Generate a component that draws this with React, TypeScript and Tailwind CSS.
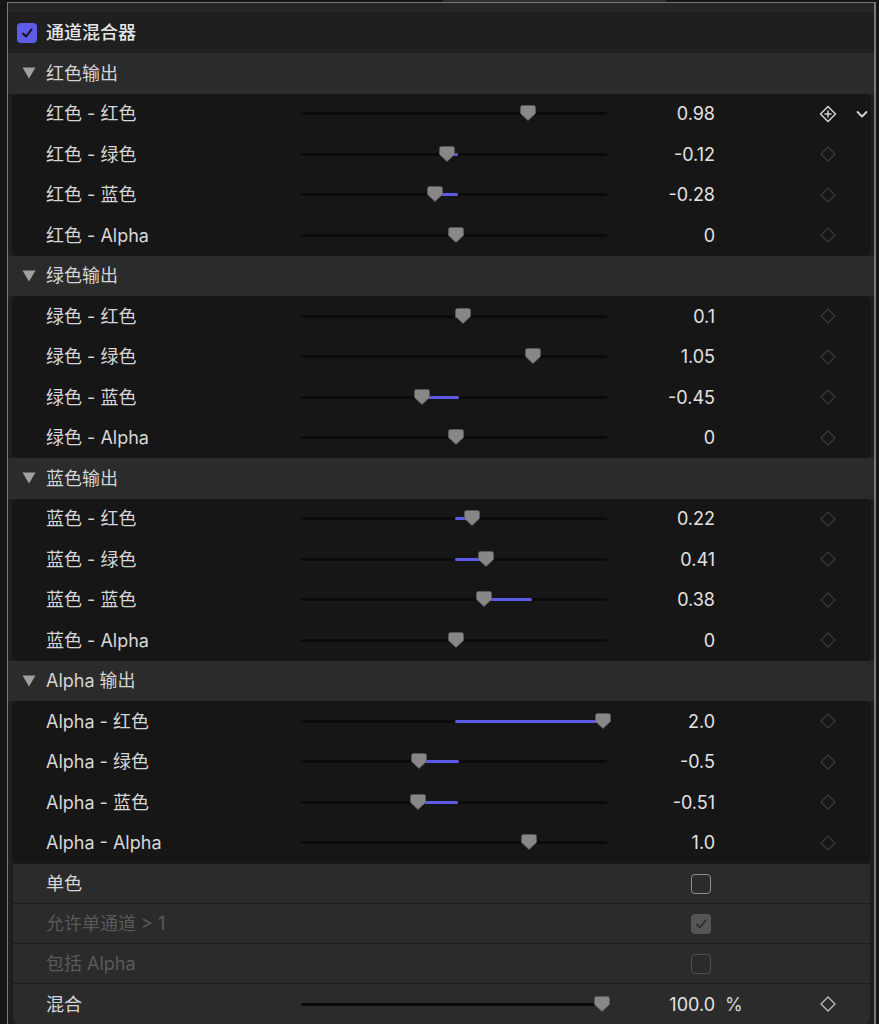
import React from "react";

type Row = { label: string; value: number; text: string; def: number };

const ZERO = 154.5; // track px for value 0
const SCALE = 73.75; // px per unit

const sections: { title: string; rows: Row[] }[] = [
  {
    title: "红色输出",
    rows: [
      { label: "红色 - 红色", value: 0.98, text: "0.98", def: 1 },
      { label: "红色 - 绿色", value: -0.12, text: "-0.12", def: 0 },
      { label: "红色 - 蓝色", value: -0.28, text: "-0.28", def: 0 },
      { label: "红色 - Alpha", value: 0, text: "0", def: 0 },
    ],
  },
  {
    title: "绿色输出",
    rows: [
      { label: "绿色 - 红色", value: 0.1, text: "0.1", def: 0 },
      { label: "绿色 - 绿色", value: 1.05, text: "1.05", def: 1 },
      { label: "绿色 - 蓝色", value: -0.45, text: "-0.45", def: 0 },
      { label: "绿色 - Alpha", value: 0, text: "0", def: 0 },
    ],
  },
  {
    title: "蓝色输出",
    rows: [
      { label: "蓝色 - 红色", value: 0.22, text: "0.22", def: 0 },
      { label: "蓝色 - 绿色", value: 0.41, text: "0.41", def: 0 },
      { label: "蓝色 - 蓝色", value: 0.38, text: "0.38", def: 1 },
      { label: "蓝色 - Alpha", value: 0, text: "0", def: 0 },
    ],
  },
  {
    title: "Alpha 输出",
    rows: [
      { label: "Alpha - 红色", value: 2.0, text: "2.0", def: 0 },
      { label: "Alpha - 绿色", value: -0.5, text: "-0.5", def: 0 },
      { label: "Alpha - 蓝色", value: -0.51, text: "-0.51", def: 0 },
      { label: "Alpha - Alpha", value: 1.0, text: "1.0", def: 1 },
    ],
  },
];

const font = { fontFamily: '"Inter", "Noto Sans CJK SC", sans-serif' };

function Thumb({ x }: { x: number }) {
  return (
    <svg
      width="16"
      height="16"
      viewBox="0 0 16 16"
      className="absolute top-[-7px]"
      style={{ left: x - 8 }}
    >
      <path
        d="M2.5 0.5 H13.5 Q15.5 0.5 15.5 2.5 V8.5 L8 15.5 L0.5 8.5 V2.5 Q0.5 0.5 2.5 0.5 Z"
        fill="#878787"
        stroke="#5a5a5a"
        strokeWidth="0.8"
      />
    </svg>
  );
}

function Slider({ value, def }: { value: number; def: number }) {
  const xv = ZERO + value * SCALE;
  const xd = ZERO + def * SCALE;
  const lo = Math.min(xv, xd) - 1;
  const hi = Math.max(xv, xd) + 3;
  return (
    <div className="relative w-[306px] h-[3px] rounded-full bg-[#0b0b0b]">
      {Math.abs(xv - xd) > 0.5 && (
        <div
          className="absolute top-0 h-[3px] rounded-full bg-[#5e5ce6]"
          style={{ left: lo, width: hi - lo }}
        />
      )}
      <Thumb x={xv} />
    </div>
  );
}

function Diamond({ active }: { active?: boolean }) {
  if (active) {
    return (
      <svg width="18" height="18" viewBox="0 0 18 18">
        <path
          d="M9 1.5 L16.5 9 L9 16.5 L1.5 9 Z"
          fill="none"
          stroke="#d4d4d4"
          strokeWidth="1.5"
          strokeLinejoin="round"
        />
        <path d="M9 5.5 V12.5 M5.5 9 H12.5" stroke="#d4d4d4" strokeWidth="1.5" />
      </svg>
    );
  }
  return (
    <svg width="18" height="18" viewBox="0 0 18 18">
      <path
        d="M9 2 L16 9 L9 16 L2 9 Z"
        fill="none"
        stroke="#383838"
        strokeWidth="1.3"
        strokeLinejoin="round"
      />
    </svg>
  );
}

function ParamRow({ row, first }: { row: Row; first?: boolean }) {
  return (
    <div className="flex items-center h-[40.5px] pl-[34px]">
      <div className="w-[255px] text-[18px] text-[#d6d6d6]">{row.label}</div>
      <Slider value={row.value} def={row.def} />
      <div className="w-[108px] text-right text-[18px] text-[#e2e2e2]">{row.text}</div>
      <div className="ml-[104px] w-[18px] flex items-center justify-center">
        <Diamond active={first} />
      </div>
      {first && (
        <svg width="14" height="14" viewBox="0 0 14 14" className="ml-[18px]">
          <path
            d="M2.5 5 L7 9.5 L11.5 5"
            fill="none"
            stroke="#d4d4d4"
            strokeWidth="1.8"
            strokeLinecap="round"
            strokeLinejoin="round"
          />
        </svg>
      )}
    </div>
  );
}

function Check({ kind }: { kind: "off" | "dimOn" | "dimOff" }) {
  if (kind === "dimOn") {
    return (
      <div className="w-[20px] h-[20px] rounded-[4px] bg-[#555555] flex items-center justify-center">
        <svg width="14" height="14" viewBox="0 0 14 14">
          <path
            d="M3 7.5 L6 10.5 L11.5 3.5"
            fill="none"
            stroke="#2e2e2e"
            strokeWidth="1.8"
            strokeLinecap="round"
            strokeLinejoin="round"
          />
        </svg>
      </div>
    );
  }
  return (
    <div
      className={
        kind === "off"
          ? "w-[20px] h-[20px] rounded-[4px] border-[1.5px] border-[#8c8c8c]"
          : "w-[20px] h-[20px] rounded-[4px] border-[1.5px] border-[#4f4f4f]"
      }
    />
  );
}

export default function App() {
  return (
    <div className="w-[879px] h-[1024px] overflow-hidden bg-[#151515]" style={font}>
      <div className="h-[2px] flex">
        <div className="ml-[443px] w-[223px] h-[2px] bg-[#2e2e2e]" />
      </div>
      <div className="ml-[7px] mr-[3px] h-[1022px] overflow-hidden border-l border-t border-r-2 border-[#7a7a7a] bg-[#1f1f1f]">
        <div className="h-[9px] bg-[#262626]" />
        {/* title */}
        <div className="h-[41px] flex items-center pl-[9px]">
          <div className="w-[20px] h-[20px] rounded-[4px] bg-[#5e5ce6] flex items-center justify-center">
            <svg width="14" height="14" viewBox="0 0 14 14">
              <path
                d="M3 7.5 L6 10.5 L11.5 3.5"
                fill="none"
                stroke="#141414"
                strokeWidth="2"
                strokeLinecap="round"
                strokeLinejoin="round"
              />
            </svg>
          </div>
          <div className="ml-[9px] text-[18px] text-[#e6e6e6] font-medium">通道混合器</div>
        </div>

        {sections.map((s, si) => (
          <div key={s.title}>
            <div className="h-[40.5px] bg-[#2b2b2b] flex items-center pl-[14px]">
              <svg width="14" height="12" viewBox="0 0 14 12">
                <path d="M0.5 0.5 H13.5 L7 11.5 Z" fill="#a0a0a0" />
              </svg>
              <div className="ml-[10px] text-[18px] text-[#d4d4d4]">{s.title}</div>
            </div>
            <div className="ml-[4px] mr-[3px] rounded-[6px] bg-[#161616]">
              {s.rows.map((r, ri) => (
                <ParamRow key={r.label} row={r} first={si === 0 && ri === 0} />
              ))}
            </div>
          </div>
        ))}

        {/* bottom options */}
        <div className="ml-[4px] mr-[3px] rounded-b-[6px] bg-[#2b2b2b] border-x border-t border-[#191919] divide-y-[1.5px] divide-[#1c1c1c] text-[18px]">
          <div className="h-[40px] flex items-center pl-[33px]">
            <div className="w-[645px] text-[#d6d6d6]">单色</div>
            <Check kind="off" />
          </div>
          <div className="h-[40px] flex items-center pl-[33px]">
            <div className="w-[645px] text-[#5a5a5a]">允许单通道 &gt; 1</div>
            <Check kind="dimOn" />
          </div>
          <div className="h-[40px] flex items-center pl-[33px]">
            <div className="w-[645px] text-[#5a5a5a]">包括 Alpha</div>
            <Check kind="dimOff" />
          </div>
          <div className="h-[40px] flex items-center pl-[33px]">
            <div className="w-[255px] text-[#d6d6d6]">混合</div>
            <div className="relative w-[306px] h-[3px] rounded-full bg-[#0b0b0b]">
              <Thumb x={301} />
            </div>
            <div className="w-[108px] text-right text-[#e2e2e2]">100.0</div>
            <div className="ml-[10px] w-[94px] text-[#d6d6d6]">%</div>
            <div className="w-[18px] flex items-center justify-center">
              <svg width="18" height="18" viewBox="0 0 18 18">
                <path
                  d="M9 2 L16 9 L9 16 L2 9 Z"
                  fill="none"
                  stroke="#bdbdbd"
                  strokeWidth="1.3"
                  strokeLinejoin="round"
                />
              </svg>
            </div>
          </div>
        </div>
      </div>
    </div>
  );
}
